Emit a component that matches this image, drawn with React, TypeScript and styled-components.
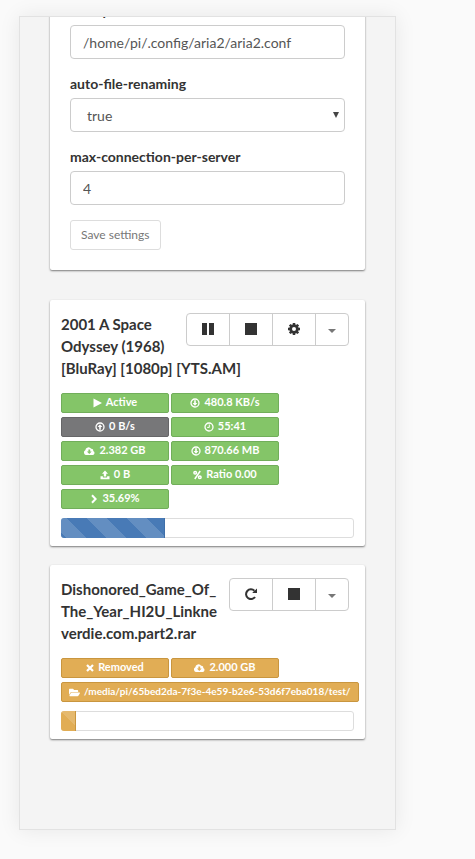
import React from "react";
import styled, { createGlobalStyle } from "styled-components";
import { FaFolderOpen } from "react-icons/fa";

const GlobalStyle = createGlobalStyle`
  *, *::before, *::after { box-sizing: border-box; }
  body {
    margin: 0;
    background: #fafafa;
    color: #333;
    font: 14px/20px Lato, "Liberation Sans", sans-serif;
  }
  button, input, select { font-family: inherit; }
`;

const Panel = styled.main`
  height: calc(100vh - 45px);
  margin: 16px 79px 29px 19px;
  padding: 0 30px;
  overflow: hidden;
  background: #f4f4f4;
  border: 1px solid #e2e2e2;
  box-shadow: 0 0 20px rgba(0, 0, 0, 0.08);
`;

const Card = styled.section`
  margin-bottom: 19px;
  padding: 13px 11px 8px;
  background: #fff;
  border-radius: 2px;
  box-shadow: 0 1px 2px rgba(0, 0, 0, 0.5);
`;

const SettingsForm = styled.form`
  margin: -16px 0 30px;
  padding: 0 20px 20px;
  background: #fff;
  border-radius: 2px;
  box-shadow: 0 1px 2px rgba(0, 0, 0, 0.5);
`;

const Field = styled.div`
  position: relative;
  margin-bottom: 15px;
`;

const FieldLabel = styled.label`
  display: block;
  margin-bottom: 4px;
  font-weight: 700;
`;

const TextInput = styled.input`
  display: block;
  width: 100%;
  height: 34px;
  padding: 6px 12px;
  color: #555;
  font-size: 14px;
  background: #fff;
  border: 1px solid #ccc;
  border-radius: 4px;
`;

const Select = styled.select`
  display: block;
  width: 100%;
  height: 34px;
  padding: 6px 16px;
  color: #555;
  font-size: 14px;
  appearance: none;
  background: #fff;
  border: 1px solid #ccc;
  border-radius: 4px;
`;

const SelectArrow = styled.svg`
  position: absolute;
  right: 6px;
  bottom: 14px;
  pointer-events: none;
`;

const SaveButton = styled.button`
  display: block;
  height: 30px;
  padding: 0 10px 2px;
  color: #777;
  font-size: 12px;
  background: #fff;
  border: 1px solid #ddd;
  border-radius: 3px;
`;

const ButtonGroup = styled.div`
  float: right;
  display: flex;
  margin: 0 5px 0 6px;
  border: 1px solid #ccc;
  border-radius: 4px;
`;

const ToolButton = styled.button<{ $narrow?: boolean }>`
  display: flex;
  align-items: center;
  justify-content: center;
  width: ${(p) => (p.$narrow ? 33 : 43)}px;
  height: 31px;
  padding: 0 0 2px;
  color: #333;
  background: none;
  border: 0;
  &:first-child { width: 42px; }
  & + & { border-left: 1px solid #ccc; }
`;

const Title = styled.h2`
  margin: 0 0 14px;
  font-size: 15px;
  line-height: 22px;
  font-weight: 700;
  overflow-wrap: anywhere;
  word-break: break-word;
`;

const tones = {
  green: { fill: "#84c568", edge: "#71ae5a" },
  grey: { fill: "#777779", edge: "#666668" },
  amber: { fill: "#e1ad55", edge: "#c9963f" },
};
type Tone = keyof typeof tones;

const Badges = styled.div`
  display: flex;
  flex-wrap: wrap;
  gap: 4px 2px;
`;

const BadgeBox = styled.span<{ $tone: Tone; $long?: boolean }>`
  display: flex;
  flex: none;
  align-items: center;
  justify-content: center;
  gap: 4px;
  min-width: 108px;
  height: 20px;
  padding: ${(p) => (p.$long ? "0 7px 2px" : "0 4px 2px")};
  color: #fff;
  font-size: ${(p) => (p.$long ? 10 : 11)}px;
  line-height: 16px;
  font-weight: 700;
  white-space: nowrap;
  background: ${(p) => tones[p.$tone].fill};
  border: 1px solid ${(p) => tones[p.$tone].edge};
  border-radius: 2px;
  svg { position: relative; top: 1px; flex: none; }
`;

const Track = styled.div`
  height: 20px;
  margin-top: 9px;
  background: #fff;
  border: 1px solid #ddd;
  border-radius: 3px;
`;

const Bar = styled.div<{ $tone: "blue" | "amber" }>`
  height: 20px;
  margin: -1px 0 0 -1px;
  background-color: ${(p) => (p.$tone === "blue" ? "#487ab6" : "#e1ad55")};
  background-image: linear-gradient(
    45deg,
    rgba(255, 255, 255, 0.15) 25%, transparent 25%,
    transparent 50%, rgba(255, 255, 255, 0.15) 50%,
    rgba(255, 255, 255, 0.15) 75%, transparent 75%
  );
  background-size: 40px 40px;
  background-position: ${(p) => (p.$tone === "blue" ? "26px 0" : "0 0")};
  border-right: 1px solid ${(p) => (p.$tone === "blue" ? "#3f6fa9" : "#c9963f")};
  border-radius: 3px 0 0 3px;
`;

const Icon = ({ w = 10, h = 10, children }: { w?: number; h?: number; children: React.ReactNode }) => (
  <svg width={w} height={h} viewBox={`0 0 ${w} ${h}`} fill="currentColor" aria-hidden="true">{children}</svg>
);

const PlayIcon = () => <Icon w={9}><path d="M.5.5v9L9 5z" /></Icon>;
const PauseIcon = () => <Icon w={12} h={12}><path d="M0 0h5v12H0zM7 0h5v12H7z" /></Icon>;
const StopIcon = () => <Icon w={12} h={12}><path d="M0 0h12v12H0z" /></Icon>;
const CaretIcon = () => <svg width="8" height="12" viewBox="0 0 8 12" aria-hidden="true"><path d="M0 6h8L4 10z" fill="#777" /></svg>;
const GearIcon = () => (
  <Icon w={12} h={12}>
    <circle cx="6" cy="6" r="3.3" fill="none" stroke="currentColor" strokeWidth="2.6" />
    {[0, 45, 90, 135].map((a) => (
      <path key={a} d="M4.8 0h2.4l.3 2.2h-3zM4.5 9.8h3L7.2 12H4.8z" transform={`rotate(${a} 6 6)`} />
    ))}
  </Icon>
);
const RepeatIcon = () => (
  <Icon w={12} h={12}>
    <path d="M9.4 2.7A4.9 4.9 0 1 0 10 9" fill="none" stroke="currentColor" strokeWidth="2" />
    <path d="M12 .4V5H7.2z" />
  </Icon>
);
const ArrowCircleIcon = ({ up }: { up?: boolean }) => (
  <Icon>
    <circle cx="5" cy="5" r="4" fill="none" stroke="currentColor" strokeWidth="1.3" />
    <path d="M4.2 2.3h1.6V5h1.6L5 7.8 2.6 5h1.6z" transform={up ? "rotate(180 5 5)" : undefined} />
  </Icon>
);
const ClockIcon = () => (
  <Icon>
    <circle cx="5" cy="5" r="4" fill="none" stroke="currentColor" strokeWidth="1.3" />
    <path d="M5.3 2.5V5.4H3.2" fill="none" stroke="currentColor" />
  </Icon>
);
const CloudDownIcon = () => (
  <Icon w={11}>
    <path fillRule="evenodd" d="M2.6 9A2.5 2.5 0 0 1 1.3 4.3 3.2 3.2 0 0 1 7.2 2.8 1.8 1.8 0 0 1 9.2 5 2.1 2.1 0 0 1 8.8 9zM4.4 3.5v2H2.9l2.4 2.6 2.4-2.6H6.2v-2z" />
  </Icon>
);
const UploadIcon = () => (
  <Icon><path d="M5 .5 8 3.7H6.2v2.8H3.8V3.7H2zM.5 6.3h2.4v1.2h4.2V6.3h2.4v2.9h-9z" /></Icon>
);
const PercentIcon = () => (
  <Icon w={9}>
    <g fill="none" stroke="currentColor" strokeWidth="1.5">
      <circle cx="2.2" cy="2.8" r="1.3" /><circle cx="6.8" cy="7.2" r="1.3" /><path d="m1.8 9 5.4-8" />
    </g>
  </Icon>
);
const ChevronIcon = () => <Icon w={8}><path d="m2 1.3 3.6 3.7L2 8.7" fill="none" stroke="currentColor" strokeWidth="2" /></Icon>;
const CrossIcon = () => <Icon w={8}><path d="m1 2 6 6M7 2 1 8" fill="none" stroke="currentColor" strokeWidth="2.2" /></Icon>;

type BadgeProps = { tone?: Tone; long?: boolean; icon: React.ReactNode; children: string };
const Badge = ({ tone = "green", long, icon, children }: BadgeProps) => (
  <BadgeBox $tone={tone} $long={long}>{icon}<span>{children}</span></BadgeBox>
);

const Progress = ({ value, tone, label }: { value: number; tone: "blue" | "amber"; label: string }) => (
  <Track role="progressbar" aria-label={label} aria-valuenow={value} aria-valuemin={0} aria-valuemax={100}>
    <Bar $tone={tone} style={{ width: `${value}%` }} />
  </Track>
);

export default function App() {
  return (
    <>
      <GlobalStyle />
      <Panel>
        <SettingsForm onSubmit={(e) => e.preventDefault()}>
          <Field>
            <FieldLabel htmlFor="conf-path">conf-path</FieldLabel>
            <TextInput id="conf-path" defaultValue="/home/pi/.config/aria2/aria2.conf" />
          </Field>
          <Field>
            <FieldLabel htmlFor="renaming">auto-file-renaming</FieldLabel>
            <Select id="renaming" defaultValue="true">
              <option>true</option>
              <option>false</option>
            </Select>
            <SelectArrow width="6" height="6" viewBox="0 0 6 6" aria-hidden="true"><path d="M0 0h6L3 6z" fill="#444" /></SelectArrow>
          </Field>
          <Field>
            <FieldLabel htmlFor="connections">max-connection-per-server</FieldLabel>
            <TextInput id="connections" defaultValue="4" />
          </Field>
          <SaveButton type="submit">Save settings</SaveButton>
        </SettingsForm>

        <Card>
          <ButtonGroup>
            <ToolButton aria-label="Pause"><PauseIcon /></ToolButton>
            <ToolButton aria-label="Stop"><StopIcon /></ToolButton>
            <ToolButton aria-label="Settings"><GearIcon /></ToolButton>
            <ToolButton $narrow aria-label="More"><CaretIcon /></ToolButton>
          </ButtonGroup>
          <Title>2001 A Space Odyssey (1968) [BluRay] [1080p] [YTS.AM]</Title>
          <Badges>
            <Badge icon={<PlayIcon />}>Active</Badge>
            <Badge icon={<ArrowCircleIcon />}>480.8 KB/s</Badge>
            <Badge tone="grey" icon={<ArrowCircleIcon up />}>0 B/s</Badge>
            <Badge icon={<ClockIcon />}>55:41</Badge>
            <Badge icon={<CloudDownIcon />}>2.382 GB</Badge>
            <Badge icon={<ArrowCircleIcon />}>870.66 MB</Badge>
            <Badge icon={<UploadIcon />}>0 B</Badge>
            <Badge icon={<PercentIcon />}>Ratio 0.00</Badge>
            <Badge icon={<ChevronIcon />}>35.69%</Badge>
          </Badges>
          <Progress value={35.69} tone="blue" label="2001 A Space Odyssey" />
        </Card>

        <Card>
          <ButtonGroup>
            <ToolButton aria-label="Retry"><RepeatIcon /></ToolButton>
            <ToolButton aria-label="Stop"><StopIcon /></ToolButton>
            <ToolButton $narrow aria-label="More"><CaretIcon /></ToolButton>
          </ButtonGroup>
          <Title>Dishonored_Game_Of_The_Year_HI2U_Linkneverdie.com.part2.rar</Title>
          <Badges>
            <Badge tone="amber" icon={<CrossIcon />}>Removed</Badge>
            <Badge tone="amber" icon={<CloudDownIcon />}>2.000 GB</Badge>
            <Badge tone="amber" long icon={<FaFolderOpen size={11} aria-hidden="true" />}>/media/pi/65bed2da-7f3e-4e59-b2e6-53d6f7eba018/test/</Badge>
          </Badges>
          <Progress value={5} tone="amber" label="Dishonored" />
        </Card>
      </Panel>
    </>
  );
}
